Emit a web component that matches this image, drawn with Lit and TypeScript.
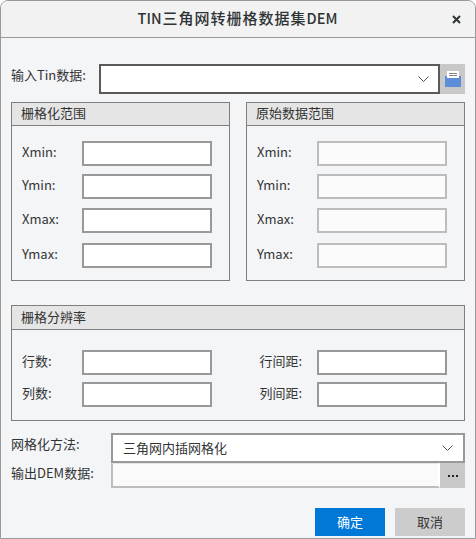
import { LitElement, html, css, svg } from "lit";
import { customElement } from "lit/decorators.js";

const chevron = svg`<svg class="chev" width="11" height="6" viewBox="0 0 11 6"><path d="M.5 .5l5 5 5-5" fill="none" stroke="#555" stroke-width="1"/></svg>`;

@customElement("app-root")
export class AppRoot extends LitElement {
  static styles = css`
    :host { display: block; width: 476px; height: 539px; font-family: "Noto Sans CJK SC", "Noto Sans", sans-serif; font-size: 13px; color: #333; background: #fff; }
    * { box-sizing: border-box; }
    .win { width: 476px; height: 539px; border: 1px solid #999; border-radius: 8px 8px 0 0; background: #f4f5f7; overflow: hidden; display: flex; flex-direction: column; }
    .title { height: 37px; flex: none; background: #f2f2f2; border-bottom: 1px solid #999; display: grid; grid-template-columns: 40px 1fr 40px; align-items: center; }
    .title h1 { margin: 0; text-align: center; font-size: 14.5px; font-weight: 500; color: #2e3436; line-height: 34px; padding-bottom: 2px; padding-right: 1px; grid-column: 2; white-space: nowrap; }
    .title h1 span { font-size: 15px; letter-spacing: 1px; margin-left: 1px; }
    .close { display: flex; justify-content: center; padding-left: 2px; }
    .main { padding: 26px 10px 0 10px; display: flex; flex-direction: column; flex: 1; }
    .row { display: flex; align-items: stretch; }
    .lab { line-height: 20px; display: flex; align-items: center; white-space: nowrap; padding-bottom: 4px; height: 25px; }
    .row .lab { height: auto; }
    .top .lab { width: 88px; padding-bottom: 8px; }
    .combo { background: #fff; border: 2px solid #5a5a5a; height: 30px; display: flex; align-items: center; justify-content: flex-end; padding-right: 9px; flex: 1; }
    .iconbtn { width: 25px; background: #c8c8c8; display: flex; align-items: center; justify-content: center; flex: none; }
    .save { margin-left: 1px; }
    .groups { display: grid; grid-template-columns: 219px 219px; gap: 16px; margin-top: 8px; }
    .group { border: 1px solid #7f7f7f; background: #f4f5f7; }
    .ghead { height: 24px; background: #e5e5e5; border-bottom: 1px solid #7f7f7f; padding-left: 9px; line-height: 21px; }
    .g1 { height: 179px; }
    .g1 .ghead { height: 23px; line-height: 20px; }
    .grid4 { display: grid; grid-template-columns: 60px 130px; grid-template-rows: 33px 34px 35px 25px; padding: 15px 0 0 10px; align-items: start; }
    .f { height: 25px; background: #fff; border: 2px solid #999; }
    .f.dis { background: #fbfbfb; border-color: #bdbdbd; }
    .g2 { margin-top: 24px; height: 116px; }
    .grid2 { display: grid; grid-template-columns: 60px 130px 105px 130px; justify-content: start; padding: 20px 0 0 10px; grid-auto-rows: 25px; row-gap: 7px; align-items: start; }
    .grid2 .r { justify-self: end; padding-right: 15px; grid-column: 3; }
    .method { margin-top: 12px; height: 30px; }
    .method .lab { width: 100px; padding-bottom: 9px; }
    .combo2 { flex: 1; background: #fff; border: 2px solid #999; display: flex; align-items: center; justify-content: space-between; padding: 0 10px; }
    .combo2 span { margin-top: -1px; }
    .out { height: 25px; }
    .out .lab { width: 100px; padding-bottom: 5px; }
    .path { flex: 1; background: #fafafa; border: 2px solid #bdbdbd; border-top: 1px solid #e5e5e5; border-right-color: #fff; }
    .foot { display: flex; justify-content: flex-end; gap: 10px; margin-top: 20px; }
    button { width: 70px; height: 28px; border: 0; font: inherit; padding: 0 0 1px; }
    .ok { background: #0078d7; color: #fff; }
    .cancel { background: #ccc; color: #333; }
  `;

  private field(dis = false) {
    return html`<div class="f ${dis ? "dis" : ""}"></div>`;
  }

  private coords(dis: boolean) {
    return ["Xmin:", "Ymin:", "Xmax:", "Ymax:"].map(
      (l) => html`<div class="lab">${l}</div>${this.field(dis)}`
    );
  }

  render() {
    return html`<div class="win">
      <div class="title">
        <h1>TIN<span>三角网转栅格数据集</span>DEM</h1>
        <div class="close">
          <svg width="9" height="9" viewBox="0 0 9 9"><path d="M1 1l7 7M8 1l-7 7" stroke="#2e3436" stroke-width="2"/></svg>
        </div>
      </div>
      <div class="main">
        <div class="row top">
          <div class="lab">输入Tin数据:</div>
          <div class="combo">${chevron}</div>
          <div class="iconbtn">
            <svg class="save" width="16" height="16" viewBox="0 0 16 16">
              <path d="M0 5H16V16H0Z" fill="#5b8dd9"/>
              <rect x="2" y="0" width="12" height="7" fill="#fff"/>
              <rect x="4" y="2" width="8" height="1" fill="#888"/>
              <rect x="4" y="4" width="8" height="1" fill="#888"/>
            </svg>
          </div>
        </div>
        <div class="groups">
          <section class="group g1">
            <div class="ghead">栅格化范围</div>
            <div class="grid4">${this.coords(false)}</div>
          </section>
          <section class="group g1">
            <div class="ghead">原始数据范围</div>
            <div class="grid4">${this.coords(true)}</div>
          </section>
        </div>
        <section class="group g2">
          <div class="ghead">栅格分辨率</div>
          <div class="grid2">
            <div class="lab">行数:</div>${this.field()}
            <div class="lab r">行间距:</div>${this.field()}
            <div class="lab">列数:</div>${this.field()}
            <div class="lab r">列间距:</div>${this.field()}
          </div>
        </section>
        <div class="row method">
          <div class="lab">网格化方法:</div>
          <div class="combo2"><span>三角网内插网格化</span>${chevron}</div>
        </div>
        <div class="row out">
          <div class="lab">输出DEM数据:</div>
          <div class="path"></div>
          <div class="iconbtn">
            <svg width="10" height="2" viewBox="0 0 10 2"><path d="M0 0h2v2H0zM4 0h2v2H4zM8 0h2v2H8z" fill="#222"/></svg>
          </div>
        </div>
        <div class="foot">
          <button class="ok">确定</button>
          <button class="cancel">取消</button>
        </div>
      </div>
    </div>`;
  }
}
